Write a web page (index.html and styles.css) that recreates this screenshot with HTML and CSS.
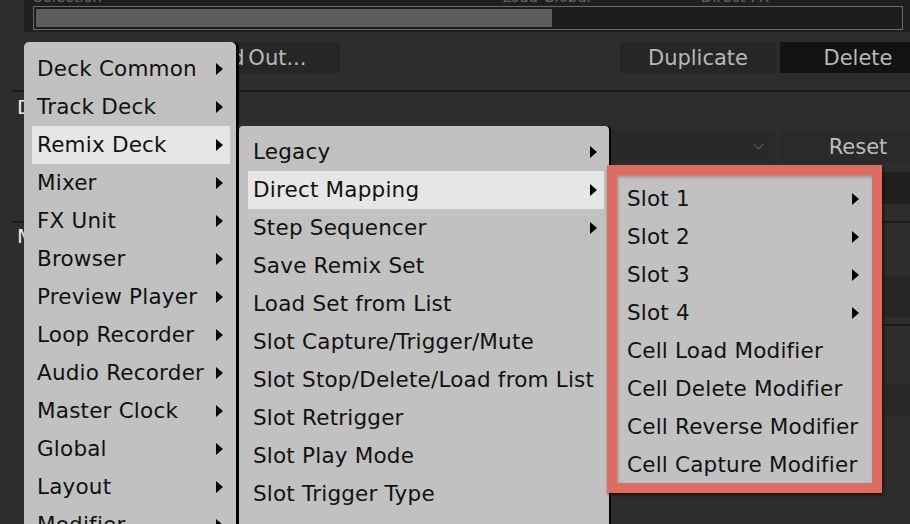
FILE: index.html
```html
<!DOCTYPE html>
<html>
<head>
<meta charset="utf-8">
<link rel="stylesheet" href="styles.css">
</head>
<body>
<div class="page">
  <div class="top">
    <div class="labels">
      <span class="lb1">Selection</span>
      <span class="lb2">Load Global</span>
      <span class="lb3">Direct FX</span>
    </div>
    <div class="bar"><div class="fill" style="width:516px"></div></div>
  </div>

  <div class="row1">
    <div class="btn addout">Add<span class="tight"> </span>Out...</div>
    <div class="btn dup">Duplicate</div>
    <div class="btn del">Delete</div>
  </div>
  <div class="divider"></div>

  <div class="section secb">
    <div class="title">Device Setup</div>
    <div class="row2">
      <div class="dropdown"><span class="chev"></span></div>
      <div class="btn reset">Reset</div>
    </div>
    <div class="stripe s1"></div>
  </div>
  <div class="divider"></div>

  <div class="section secc">
    <div class="title">Mapping Details</div>
    <div class="stripe s2"></div>
  </div>
  <div class="divider inner"></div>

  <div class="section secd">
    <div class="stripe s3"></div>
  </div>

  <div class="menu m1">
    <div class="item"><span>Deck Common</span><i class="arr"></i></div>
    <div class="item"><span>Track Deck</span><i class="arr"></i></div>
    <div class="item hl"><span>Remix Deck</span><i class="arr"></i></div>
    <div class="item"><span>Mixer</span><i class="arr"></i></div>
    <div class="item"><span>FX Unit</span><i class="arr"></i></div>
    <div class="item"><span>Browser</span><i class="arr"></i></div>
    <div class="item"><span>Preview Player</span><i class="arr"></i></div>
    <div class="item"><span>Loop Recorder</span><i class="arr"></i></div>
    <div class="item"><span>Audio Recorder</span><i class="arr"></i></div>
    <div class="item"><span>Master Clock</span><i class="arr"></i></div>
    <div class="item"><span>Global</span><i class="arr"></i></div>
    <div class="item"><span>Layout</span><i class="arr"></i></div>
    <div class="item"><span>Modifier</span><i class="arr"></i></div>
  </div>

  <div class="menu m2">
    <div class="item"><span>Legacy</span><i class="arr"></i></div>
    <div class="item hl"><span>Direct Mapping</span><i class="arr"></i></div>
    <div class="item"><span>Step Sequencer</span><i class="arr"></i></div>
    <div class="item"><span>Save Remix Set</span></div>
    <div class="item"><span>Load Set from List</span></div>
    <div class="item"><span>Slot Capture/Trigger/Mute</span></div>
    <div class="item"><span>Slot Stop/Delete/Load from List</span></div>
    <div class="item"><span>Slot Retrigger</span></div>
    <div class="item"><span>Slot Play Mode</span></div>
    <div class="item"><span>Slot Trigger Type</span></div>
  </div>

  <div class="menu m3">
    <div class="item"><span>Slot 1</span><i class="arr"></i></div>
    <div class="item"><span>Slot 2</span><i class="arr"></i></div>
    <div class="item"><span>Slot 3</span><i class="arr"></i></div>
    <div class="item"><span>Slot 4</span><i class="arr"></i></div>
    <div class="item"><span>Cell Load Modifier</span></div>
    <div class="item"><span>Cell Delete Modifier</span></div>
    <div class="item"><span>Cell Reverse Modifier</span></div>
    <div class="item"><span>Cell Capture Modifier</span></div>
  </div>
</div>
</body>
</html>
```

FILE: styles.css
```css
* { box-sizing: border-box; }
html, body {
  margin: 0;
  padding: 0;
  width: 910px;
  height: 524px;
  overflow: hidden;
  background: #2d2d2d;
}
.page {
  position: relative;
  width: 910px;
  height: 524px;
  overflow: hidden;
  font-family: "DejaVu Sans", "Liberation Sans", sans-serif;
}

/* top panel */
.top {
  margin-left: 24px;
  height: 32px;
  background: #1f1f1f;
  padding: 0 7px 0 9px;
}
.labels {
  height: 5px;
  overflow: hidden;
  display: flex;
  align-items: flex-end;
  font-size: 15px;
  line-height: 15px;
  color: #666666;
}
.labels span { flex-shrink: 0; }
.lb2 { margin-left: 400px; }
.lb3 { margin-left: 110px; }
.bar {
  margin-top: 1px;
  height: 24px;
  border: 1px solid #6a6a6a;
  padding: 2px;
  background: #1d1d1d;
}
.fill {
  height: 100%;
  background: #5d5d5d;
}

/* buttons row */
.row1 {
  height: 58px;
  padding-top: 10px;
  display: flex;
  align-items: flex-start;
}
.btn {
  flex-shrink: 0;
  height: 31px;
  width: 156px;
  display: flex;
  align-items: center;
  justify-content: center;
  font-size: 21px;
  color: #b8b8b8;
  background: #262626;
  white-space: pre;
}
.addout {
  margin-left: 184px;
  justify-content: flex-start;
  padding-left: 20px;
}
.tight { letter-spacing: -3px; }
.dup { margin-left: 280px; }
.del { margin-left: 4px; background: #121212; }

.divider {
  height: 2px;
  margin-left: 12px;
  background: #1b1b1b;
}
.divider.inner { margin-left: 60px; }

.section { position: relative; }
.title {
  margin-left: 17px;
  font-size: 20px;
  line-height: 20px;
  color: #e8e8e8;
  white-space: nowrap;
}
.secb { height: 129px; padding-top: 5px; }
.row2 {
  margin-top: 13px;
  display: flex;
  height: 33px;
}
.dropdown {
  margin-left: 260px;
  width: 515px;
  height: 33px;
  background: #292929;
  position: relative;
  flex-shrink: 0;
}
.chev {
  position: absolute;
  right: 13px;
  top: 11px;
  width: 7px;
  height: 7px;
  border-right: 1px solid #5c5c5c;
  border-bottom: 1px solid #5c5c5c;
  transform: rotate(45deg);
}
.reset {
  margin-left: 5px;
  height: 33px;
  background: #2a2a2a;
  color: #bdbdbd;
}
.stripe { height: 32px; margin-left: 60px; }
.s1 { margin-top: 9px; background: #1f1f1f; }

.secc { height: 101px; padding-top: 3px; }
.s2 { margin-top: 30px; height: 41px; background: #262626; }

.secd { height: 200px; padding-top: 58px; }
.s3 { height: 31px; background: #282828; }

/* menus */
.menu {
  position: absolute;
  background: #c1c1c1;
  color: #111111;
  font-family: "DejaVu Sans", "Liberation Sans", sans-serif;
  font-size: 21.5px;
  letter-spacing: 0.2px;
}
.item {
  height: 38px;
  line-height: 38px;
  display: flex;
  align-items: center;
  justify-content: space-between;
  white-space: nowrap;
}
.item span { line-height: 38px; }
.hl { background: #e6e6e6; }
.arr {
  display: block;
  flex-shrink: 0;
  width: 0;
  height: 0;
  border-left: 7px solid #000;
  border-top: 6px solid transparent;
  border-bottom: 6px solid transparent;
}

.m1 {
  left: 24px;
  top: 42px;
  width: 212px;
  height: 540px;
  padding: 8px 6px 0 8px;
  border-radius: 5px 5px 0 0;
  box-shadow: 3px 0 0 #000;
}
.m1 .item { padding: 0 7px 0 5px; }

.m2 {
  left: 239px;
  top: 126px;
  width: 370px;
  height: 420px;
  padding: 7px 5px 0 9px;
  border-radius: 4px 4px 0 0;
  box-shadow: 2px 0 0 #000;
}
.m2 .item { padding: 0 7px 0 5px; }

.m3 {
  left: 607px;
  top: 165px;
  width: 275px;
  height: 328px;
  border: 10px solid #e06b61;
  padding-top: 5px;
  box-shadow: 1px 2px 3px rgba(0, 0, 0, 0.55), inset 1px 2px 3px rgba(0, 0, 0, 0.25);
}
.m3 .item { padding: 0 13px 0 10px; }
```
